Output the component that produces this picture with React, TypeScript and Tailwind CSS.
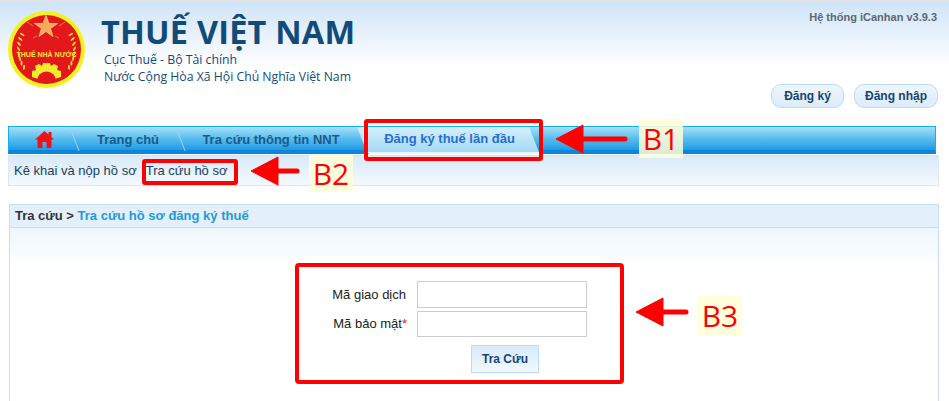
const sans = 'font-["Liberation_Sans",Arial,sans-serif]';

// wheat leaves, placed along the inner ring
const wheat = [0, 1, 2, 3, 4, 5, 6, 7].map((i) => {
  const a = ((150 + i * 9.5) * Math.PI) / 180;
  return { dx: Math.cos(a), dy: Math.sin(a), rot: 150 + i * 9.5 };
});

function Emblem() {
  return (
    <svg width="78" height="78" viewBox="0 0 78 78" className="shrink-0">
      <circle cx="38.5" cy="38.5" r="38.5" fill="#f2f220" />
      <circle cx="38.5" cy="38.5" r="34.5" fill="#e2181c" />
      <path
        d="M38 4.5 L41 12.5 L49.5 12.5 L42.5 17.5 L45 25.5 L38 20.5 L31 25.5 L33.5 17.5 L26.5 12.5 L35 12.5 Z"
        fill="#f6a860"
        stroke="#f8cf6a"
        strokeWidth="0.8"
      />
      <path d="M19 11l6 4M57 11l-6 4M25 27l4-2M51 27l-4-2" stroke="#e8963a" strokeWidth="0.8" />
      {wheat.map((w, i) => (
        <g key={i} fill="#e8da30">
          <ellipse cx={38.5 + w.dx * 28} cy={38.5 - w.dy * 30} rx="2.6" ry="1" transform={`rotate(${w.rot - 120} ${38.5 + w.dx * 28} ${38.5 - w.dy * 30})`} />
          <ellipse cx={38.5 - w.dx * 28} cy={38.5 - w.dy * 30} rx="2.6" ry="1" transform={`rotate(${120 - w.rot} ${38.5 - w.dx * 28} ${38.5 - w.dy * 30})`} />
        </g>
      ))}
      <path
        d="M24 66 L24 60 L28 59 L27 55 L31 53 L34 55 L35 52 L42 52 L43 55 L46 53 L50 55 L49 59 L53 60 L53 66 Q38 72 24 66 Z"
        fill="#f2ea2a"
      />
      <path d="M29 70 A9.5 9.5 0 0 1 48 70 Q38.5 74 29 70 Z" fill="#e2181c" />
      <text x="38.5" y="46" textAnchor="middle" fontSize="7" fontWeight="700" fill="#f6e93a" fontFamily="'Liberation Sans', sans-serif">
        THUẾ NHÀ NƯỚC
      </text>
    </svg>
  );
}

function TabSlant() {
  return (
    <svg width="12" height="24" viewBox="0 0 12 24" className="shrink-0">
      <path d="M1 0 L10 24" stroke="#9ad6f2" strokeWidth="1" fill="none" />
    </svg>
  );
}

function Arrow({ className, width }: { className: string; width: number }) {
  return (
    <svg width={width} height="30" viewBox={`0 0 ${width} 30`} className={`absolute ${className}`}>
      <path d="M1 15 L28 1 L28 29 Z" fill="#ff0000" stroke="#ff0000" strokeLinejoin="round" />
      <path d={`M26 15 L${width - 3} 15`} stroke="#ff0000" strokeWidth="5" strokeLinecap="round" />
    </svg>
  );
}

function Tag({ className, text }: { className: string; text: string }) {
  return (
    <div
      className={`absolute ${className} flex w-[44px] items-center justify-center bg-[#ffffd8]/85 font-["Open_Sans",sans-serif] text-[30px] leading-none text-[#ff0000]`}
    >
      {text}
    </div>
  );
}

export default function App() {
  return (
    <div className={`relative h-[401px] w-[949px] overflow-hidden bg-white ${sans}`}>
      {/* header */}
      <div className="h-[110px] border-t-2 border-[#e3e3e3] bg-gradient-to-b from-[#cfe4f8] from-0% via-white via-[60%] to-white">
        <div className="flex justify-between">
          <div className="flex pl-2 pt-[9px]">
            <Emblem />
            <div className='pl-[15px] font-["Open_Sans",sans-serif]'>
              <div className="mt-[3px] text-[32.5px] font-bold leading-[36px] tracking-[0.2px] text-[#134b78]">
                THUẾ VIỆT NAM
              </div>
              <div className="pl-[3px] pt-[2px] text-[12.25px] leading-[16.5px] text-[#134b78]">
                <div>Cục Thuế - Bộ Tài chính</div>
                <div>Nước Cộng Hòa Xã Hội Chủ Nghĩa Việt Nam</div>
              </div>
            </div>
          </div>
          <div className="flex flex-col items-end pr-[12px]">
            <div className="pt-[8px] text-[11px] font-bold leading-[14px] text-[#5f6770]">Hệ thống iCanhan v3.9.3</div>
            <div className="mt-[60px] flex gap-[10px]">
              <button className="h-[24px] w-[73px] rounded-[10px] border border-[#bcdcf8] bg-gradient-to-b from-[#eef6fd] to-[#dcecfa] text-[12px] font-bold text-[#17456f]">
                Đăng ký
              </button>
              <button className="mr-[-1px] h-[24px] w-[84px] rounded-[10px] border border-[#bcdcf8] bg-gradient-to-b from-[#eef6fd] to-[#dcecfa] text-[12px] font-bold text-[#17456f]">
                Đăng nhập
              </button>
            </div>
          </div>
        </div>
      </div>

      {/* main nav */}
      <div className="ml-2 mt-[16px] flex h-[28px] w-[928px] items-stretch border border-b-[4px] border-[#12aef0] border-b-[#0a86dc] bg-gradient-to-b from-[#a4e0f8] via-[#58bdee] to-[#1a9ae6]">
        <div className="flex w-[60px] items-center justify-center pl-[10px] pt-[2px]">
          <svg width="19" height="17" viewBox="0 0 19 17">
            <path d="M9.5 0 L19 8.5 L16.5 8.5 L16.5 17 L11.5 17 L11.5 11 L7.5 11 L7.5 17 L2.5 17 L2.5 8.5 L0 8.5 Z" fill="#f01212" />
            <rect x="13.5" y="1" width="3" height="5" fill="#f01212" />
          </svg>
        </div>
        <TabSlant />
        <div className="flex w-[94px] items-center justify-center pt-[2px] text-[13px] font-bold text-[#1c5a88]">Trang chủ</div>
        <TabSlant />
        <div className="flex w-[170px] items-center justify-center pr-[2px] pt-[2px] text-[13px] font-bold text-[#1c5a88]">Tra cứu thông tin NNT</div>
        <TabSlant />
        <div className="mb-[-4px] ml-[-12px] flex w-[182px] items-center justify-center border-b-2 border-[#eaf6fd] bg-gradient-to-b from-[#d4effc] to-[#a6daf5] pb-[2px] pl-[3px] text-[13px] font-bold text-[#1f6fd0] [clip-path:polygon(0_0,172px_0,182px_25px,182px_100%,12px_100%,10px_25px)]">
          Đăng ký thuế lần đầu
        </div>
      </div>

      {/* sub nav */}
      <div className="ml-2 mt-px flex h-[31px] w-[931px] items-center border border-[#dbe8f4] border-t-[#cfe4f8] bg-gradient-to-b from-[#d8eafa] to-[#f4f9fe] pl-[5px] text-[13px] text-[#1c3f5c]">
        <span>Kê khai và nộp hồ sơ</span>
        <span className="ml-[9px]">Tra cứu hồ sơ</span>
      </div>

      {/* content */}
      <div className="ml-[9px] mt-[18px] w-[930px] border border-[#c5def5]">
        <div className="flex h-[23px] items-center border-b border-[#c5def5] bg-[#e3f0fb] pl-[5px] text-[13px] font-bold text-[#333]">
          Tra cứu &gt;&nbsp;<span className="text-[#1d9bd8]">Tra cứu hồ sơ đăng ký thuế</span>
        </div>
        <div className="h-[180px] bg-gradient-to-b from-[#eef6fd] via-white via-[22%] to-white">
          <div className="ml-[309px] flex w-[280px] flex-col pt-[53px] text-[13px] text-[#222]">
            <div className="flex h-[27px] items-center">
              <span className="w-[87px] text-right">Mã giao dịch</span>
              <input className="ml-[11px] h-[27px] w-[170px] border border-[#ccc] bg-white" />
            </div>
            <div className="mt-[3px] flex h-[26px] items-center">
              <span className="w-[88px] text-right">
                Mã bảo mật<span className="text-[#f01030]">*</span>
              </span>
              <input className="ml-[10px] h-[26px] w-[170px] border border-[#ccc] bg-white" />
            </div>
            <button className="ml-[152px] mt-[8px] h-[28px] w-[68px] border border-[#b9dcf8] bg-gradient-to-b from-[#d8eafa] to-[#f2f8fe] text-[12px] font-bold text-[#17456f]">
              Tra Cứu
            </button>
          </div>
        </div>
      </div>

      {/* red annotation marks */}
      <div className="absolute left-[364px] top-[119px] h-[42px] w-[179px] rounded-[3px] border-[4px] border-[#ff0000]" />
      <Arrow className="left-[555px] top-[124px]" width={73} />
      <Tag className="left-[639px] top-[119px] h-[39px]" text="B1" />

      <div className="absolute left-[142px] top-[159px] h-[26px] w-[96px] rounded-[3px] border-[4px] border-[#ff0000]" />
      <Arrow className="left-[250px] top-[156px]" width={50} />
      <Tag className="left-[309px] top-[155px] h-[37px]" text="B2" />

      <div className="absolute left-[295px] top-[263px] h-[121px] w-[329px] rounded-[4px] border-[4px] border-[#ff0000]" />
      <Arrow className="left-[635px] top-[297px]" width={54} />
      <Tag className="left-[698px] top-[296px] h-[39px]" text="B3" />
    </div>
  );
}
